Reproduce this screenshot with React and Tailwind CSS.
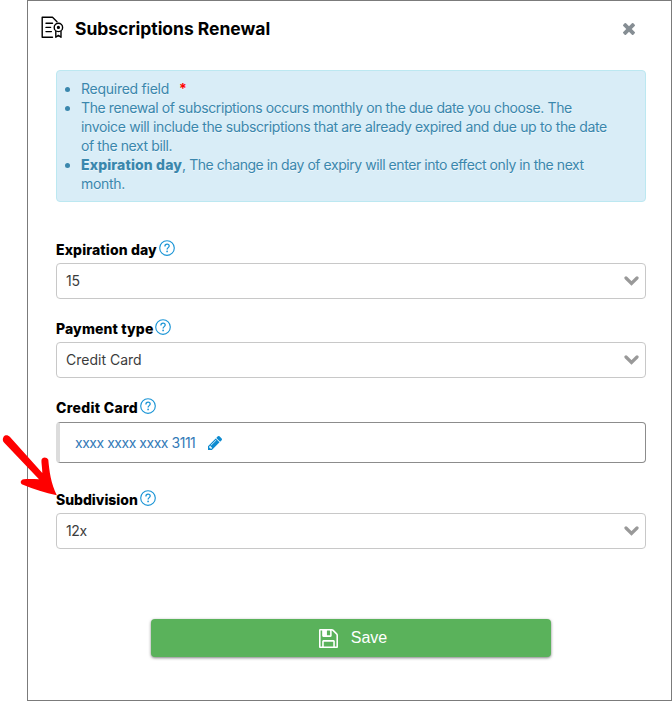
import clsx from "clsx";

const HelpIcon = () => (
  <svg className="mt-px ml-[2px] h-4 w-4 shrink-0" viewBox="0 0 16 16" fill="none">
    <circle cx="8" cy="8" r="7.3" stroke="#1b95d6" strokeWidth="1.15" />
    <path
      d="M5.9 6.4C5.9 5 6.8 4.2 8.1 4.2S10.2 5 10.2 6.1C10.2 7.6 8.1 7.7 8.1 9.4"
      stroke="#1b95d6"
      strokeWidth="1.25"
    />
    <circle cx="8.1" cy="11.4" r="0.85" fill="#1b95d6" />
  </svg>
);

const CertificateIcon = () => (
  <svg
    className="-mt-[3px] h-[23px] w-[23px]"
    viewBox="0 0 23 23"
    fill="none"
    stroke="#000"
    strokeWidth="1.4"
    strokeLinejoin="round"
    strokeLinecap="round"
  >
    <path d="M11.500 21.2H1.2V1.2h10.300l4.500 4.500" />
    <path d="M5 7.2h6.500M5 11.4h4.600M5 15.6h5.400" />
    <circle cx="17.4" cy="11.4" r="4.2" />
    <circle cx="17.4" cy="11.4" r="0.9" fill="#000" />
    <path d="M14.800 15.300v6l2.600-1.900 2.600 1.900v-6" />
  </svg>
);

const CloseIcon = () => (
  <svg className="h-3 w-3" viewBox="302 366 1188 1188" fill="#868e94">
    <path d="M1490 1322q0 40-28 68l-136 136q-28 28-68 28t-68-28l-294-294-294 294q-28 28-68 28t-68-28l-136-136q-28-28-28-68t28-68l294-294-294-294q-28-28-28-68t28-68l136-136q28-28 68-28t68 28l294 294 294-294q28-28 68-28t68 28l136 136q28 28 28 68t-28 68l-294 294 294 294q28 28 28 68z" />
  </svg>
);

const PencilIcon = () => (
  <svg className="h-[14px] w-[14px]" viewBox="128 149 1515 1515" fill="#0d8bd0">
    <path d="M491 1536l91-91-235-235-91 91v107h128v128h107zm523-928q0-22-22-22-10 0-17 7l-542 542q-7 7-7 17 0 22 22 22 10 0 17-7l542-542q7-7 7-17zm-54-192l416 416-832 832h-416v-416zm683 96q0 53-37 90l-166 166-416-416 166-165q36-38 90-38 53 0 91 38l235 234q37 39 37 91z" />
  </svg>
);

const SaveIcon = () => (
  <svg className="h-[19px] w-[19px]" viewBox="0 128 1536 1536" fill="#fff">
    <path d="M384 1536h768v-384h-768v384zm896 0h128v-896q0-14-10-38.500t-20-34.500l-281-281q-10-10-34-20t-39-10v416q0 40-28 68t-68 28h-576q-40 0-68-28t-28-68v-416h-128v1280h128v-416q0-40 28-68t68-28h832q40 0 68 28t28 68v416zm-384-928v-320q0-13-9.500-22.500t-22.500-9.500h-192q-13 0-22.500 9.500t-9.500 22.500v320q0 13 9.500 22.500t22.500 9.500h192q13 0 22.500-9.500t9.500-22.500zm640 32v928q0 40-28 68t-68 28h-1344q-40 0-68-28t-28-68v-1344q0-40 28-68t68-28h928q40 0 88 20t76 48l280 280q28 28 48 76t20 88z" />
  </svg>
);

const Label = ({ children, className }) => (
  <div className="flex h-6 items-start">
    <span
      className={clsx(
        "mt-px text-[14px] leading-[19px] font-extrabold whitespace-nowrap text-black",
        className
      )}
    >
      {children}
    </span>
    <HelpIcon />
  </div>
);

const Select = ({ value, className }) => (
  <button
    type="button"
    className="flex h-9 w-full items-center justify-between rounded border border-[#c8c8c8] bg-white pr-[6px] pl-[9px] text-[14px] text-[#3c3c3c]"
  >
    <span className={clsx("-mt-0.5", className)}>{value}</span>
    <svg className="h-[10px] w-[15px]" viewBox="0 0 15 10" fill="none">
      <path
        d="M2 2l5.500 5.500L13 2"
        stroke="#999"
        strokeWidth="3.200"
        strokeLinecap="round"
      />
    </svg>
  </button>
);

const App = () => {
  return (
    <div className="h-[701px] w-[672px] bg-white pl-[27px] font-['Inter',sans-serif]">
      <div className="relative h-full border border-[#7b7b7b] px-[28px] pr-[25px]">
        <div className="-ml-[15px] flex h-[69px] items-start justify-between pt-[15px] pr-[11px]">
          <div className="flex items-center gap-[11px]">
            <CertificateIcon />
            <h1 className="text-[17.5px] leading-[26px] font-bold tracking-[-0.03px] whitespace-nowrap text-black">
              Subscriptions Renewal
            </h1>
          </div>
          <button type="button" className="mt-[7px]">
            <CloseIcon />
          </button>
        </div>

        <ul className="h-[132px] list-disc rounded border border-[#bce8f1] bg-[#d9edf7] pt-[8px] pl-6 text-[14px] leading-[19px] whitespace-nowrap text-[#3a87ad] [text-shadow:0_1px_0_rgba(255,255,255,0.5)]">
          <li>
            <span className="tracking-[-0.26px]">Required field</span>
            <span className="ml-[10px] font-bold text-[#ff0000]">*</span>
          </li>
          <li>
            <span className="block tracking-[-0.39px]">
              The renewal of subscriptions occurs monthly on the due date you choose. The
            </span>
            <span className="block tracking-[-0.35px]">
              invoice will include the subscriptions that are already expired and due up to the date
            </span>
            <span className="block tracking-[-0.39px]">of the next bill.</span>
          </li>
          <li>
            <span className="block tracking-[-0.44px]">
              <b className="font-extrabold tracking-[0.14px]">Expiration day</b>, The change in day
              of expiry will enter into effect only in the next
            </span>
            <span className="block tracking-[-0.3px]">month.</span>
          </li>
        </ul>

        <div className="mt-[37px]">
          <Label className="tracking-[0.13px]">Expiration day</Label>
          <Select value="15" className="tracking-[-0.2px]" />
        </div>

        <div className="mt-[19px]">
          <Label className="tracking-[0.13px]">Payment type</Label>
          <Select value="Credit Card" />
        </div>

        <div className="mt-[19px]">
          <Label className="tracking-[0.31px]">Credit Card</Label>
          <div className="mt-px flex h-[41px] items-center gap-[13px] rounded border border-l-4 border-[#8c8c8c] border-l-[#dcdcdc] pl-[15px] text-[14px] text-[#337ab7]">
            <span className="tracking-[-0.47px]">xxxx xxxx xxxx 3111</span>
            <PencilIcon />
          </div>
        </div>

        <div className="mt-[26px]">
          <Label className="tracking-[-0.03px]">Subdivision</Label>
          <Select value="12x" className="tracking-[-0.4px]" />
        </div>

        <button
          type="button"
          className="mt-[70px] ml-[95px] flex h-[38px] w-[400px] items-center justify-center gap-[13px] rounded bg-[#5ab25b] pl-[4px] font-['Liberation_Sans',sans-serif] text-[16px] text-white shadow-[0_1px_3px_rgba(0,0,0,0.5)]"
        >
          <SaveIcon />
          Save
        </button>

        {/* pointer over the subdivision field */}
        <svg
          className="absolute top-[433px] left-[-27px] h-[64px] w-[57px]"
          viewBox="0 0 57 64"
        >
          <path
            d="M2.600 2.700C4.300 0.500 7 0.800 8.800 2.800L41.300 39C41.400 34 40 28 40.600 25.500C41.600 22.800 45.600 22.600 47.300 25.800C48.300 37 49.800 49.500 55.800 61.300C44 59 33 55 22 50.700C18.600 49.500 19.200 45.700 22.800 45.200C28 44.800 33 45.100 38 45.300L3.200 8.700C1.600 7 1.300 4.900 2.600 2.700Z"
            fill="#fe0000"
          />
        </svg>
      </div>
    </div>
  );
};

export default App;
